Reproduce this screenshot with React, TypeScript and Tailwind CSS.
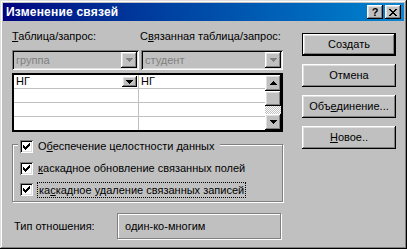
import React from 'react';

const raised =
  'shadow-[inset_-1px_-1px_#000,inset_1px_1px_#fff,inset_-2px_-2px_#808080,inset_2px_2px_#dfdfdf]';
const sunken =
  'shadow-[inset_1px_1px_#808080,inset_-1px_-1px_#fff,inset_2px_2px_#000,inset_-2px_-2px_#dfdfdf]';
const etched = 'border border-[#808080] shadow-[inset_1px_1px_#fff,1px_1px_#fff]';

const Arrow = ({ dir = 'down', color = '#000' }: { dir?: 'up' | 'down'; color?: string }) => (
  <svg width="7" height="4" viewBox="0 0 7 4" shapeRendering="crispEdges">
    <path
      d={dir === 'down' ? 'M0 0h7v1h-1v1h-1v1h-1v1h-1v-1h-1v-1h-1v-1h-1z' : 'M3 0h1v1h1v1h1v1h1v1h-7v-1h1v-1h1v-1h1z'}
      fill={color}
    />
  </svg>
);

const Check = () => (
  <svg width="7" height="7" viewBox="0 0 7 7" shapeRendering="crispEdges">
    <path
      d="M6 0h1v1h-1z M5 1h2v1h-2z M0 2h1v1h-1z M4 2h3v1h-3z M0 3h2v1h-2z M3 3h3v1h-3z M0 4h5v1h-5z M1 5h3v1h-3z M2 6h1v1h-1z"
      fill="#000"
    />
  </svg>
);

const CheckBox = () => (
  <div className={`w-[13px] h-[13px] shrink-0 bg-white flex items-center justify-center ${sunken}`}>
    <Check />
  </div>
);

const Combo = ({ text, width }: { text: string; width: string }) => (
  <div className={`${width} h-[20px] bg-[#c0c0c0] flex items-center justify-between pl-[4px] pr-[2px] ${sunken}`}>
    <span className="text-[#808080] leading-none">{text}</span>
    <div className={`w-[16px] h-[16px] bg-[#c0c0c0] flex items-center justify-center ${raised}`}>
      <Arrow color="#808080" />
    </div>
  </div>
);

const Button = ({ children, isDefault }: { children: React.ReactNode; isDefault?: boolean }) => (
  <div className={`h-[23px] w-[94px] ${isDefault ? 'border border-black' : ''}`}>
    <div className={`h-full w-full bg-[#c0c0c0] flex items-center justify-center ${raised}`}>{children}</div>
  </div>
);

export default function App() {
  const rows = ['НГ', '', '', ''];
  return (
    <div className="w-[407px] h-[249px] bg-[#c0c0c0] p-[3px] flex flex-col font-['Liberation_Sans',Arial,sans-serif] text-[11px] text-black shadow-[inset_-1px_-1px_#000,inset_1px_1px_#dfdfdf,inset_-2px_-2px_#808080,inset_2px_2px_#fff]">
      {/* Title bar */}
      <div className="h-[18px] shrink-0 bg-gradient-to-r from-[#000080] to-[#1084d0] flex items-center justify-between pl-[3px] pr-[3px]">
        <span className="text-white font-bold text-[12px] tracking-[0.2px]">Изменение связей</span>
        <div className="flex gap-[2px]">
          <div className={`w-[16px] h-[14px] bg-[#c0c0c0] flex items-center justify-center font-bold text-[11px] leading-none ${raised}`}>
            ?
          </div>
          <div className={`w-[16px] h-[14px] bg-[#c0c0c0] flex items-center justify-center ${raised}`}>
            <svg width="8" height="7" viewBox="0 0 8 7" shapeRendering="crispEdges">
              <path
                d="M0 0h2v1h1v1h2v-1h1v-1h2v1h-1v1h-1v1h-1v1h1v1h1v1h1v1h-2v-1h-1v-1h-2v1h-1v1h-2v-1h1v-1h1v-1h1v-1h-1v-1h-1v-1h-1z"
                fill="#000"
              />
            </svg>
          </div>
        </div>
      </div>

      <div className="flex flex-1">
        {/* Left side */}
        <div className="w-[281px] pl-[9px] pt-[9px] flex flex-col">
          <div className="flex h-[13px] leading-[13px]">
            <span className="w-[128px]">
              <u>Т</u>аблица/запрос:
            </span>
            <span>
              С<u>в</u>язанная таблица/запрос:
            </span>
          </div>

          <div className="flex gap-[2px] mt-[7px]">
            <Combo text="группа" width="w-[127px]" />
            <Combo text="студент" width="w-[142px]" />
          </div>

          {/* Join grid */}
          <div className="mt-[3px] w-[271px] h-[59px] border-2 border-black bg-white flex">
            <div className="flex-1 flex flex-col gap-px bg-[#c0c0c0]">
              {rows.map((r, i) => (
                <div key={i} className="h-[13px] flex gap-px">
                  <div className="w-[124px] bg-white flex items-center justify-between pl-[2px] pr-[1px]">
                    <span className="leading-none">{r}</span>
                    {i === 0 && (
                      <div className={`w-[15px] h-[11px] bg-[#c0c0c0] flex items-center justify-center ${raised}`}>
                        <Arrow />
                      </div>
                    )}
                  </div>
                  <div className="flex-1 bg-white flex items-center pl-[2px]">
                    <span className="leading-none">{r}</span>
                  </div>
                </div>
              ))}
            </div>
            <div className="w-[16px] flex flex-col">
              <div className={`h-[16px] bg-[#c0c0c0] flex items-center justify-center ${raised}`}>
                <Arrow dir="up" />
              </div>
              <div className={`h-[15px] bg-[#c0c0c0] ${raised}`} />
              <div className="flex-1 bg-[repeating-conic-gradient(#fff_0_25%,#c0c0c0_0_50%)] bg-[length:2px_2px]" />
              <div className={`h-[16px] bg-[#c0c0c0] flex items-center justify-center ${raised}`}>
                <Arrow />
              </div>
            </div>
          </div>

          {/* Referential integrity group */}
          <div className={`relative mt-[12px] w-[271px] h-[58px] ${etched} pl-[7px] pt-[17px] flex flex-col gap-[8px]`}>
            <div className="absolute left-[5px] top-[-5px] bg-[#c0c0c0] flex items-center gap-[5px] pl-[2px] pr-[6px]">
              <CheckBox />
              <span className="leading-[13px]">
                О<u>б</u>еспечение целостности данных
              </span>
            </div>
            <div className="flex items-center gap-[4px] h-[13px]">
              <CheckBox />
              <span className="pl-[1px] leading-[13px]">
                <u>к</u>аскадное обновление связанных полей
              </span>
            </div>
            <div className="flex items-center gap-[4px] h-[13px]">
              <CheckBox />
              <span className="px-[1px] h-[16px] leading-[14px] border border-dotted border-black">
                ка<u>с</u>кадное удаление связанных записей
              </span>
            </div>
          </div>

          <div className="mt-[11px] flex items-center">
            <span className="w-[105px] pl-[2px]">Тип отношения:</span>
            <div className={`w-[164px] h-[26px] ${etched} flex items-center pl-[7px]`}>один-ко-многим</div>
          </div>
        </div>

        {/* Right side buttons */}
        <div className="ml-[18px] pt-[12px] flex flex-col gap-[8px]">
          <Button isDefault>
            <span>
              Соз<u>д</u>ать
            </span>
          </Button>
          <Button>Отмена</Button>
          <Button>
            <span>
              Объ<u>е</u>динение...
            </span>
          </Button>
          <Button>
            <span>
              <u>Н</u>овое..
            </span>
          </Button>
        </div>
      </div>
    </div>
  );
}
